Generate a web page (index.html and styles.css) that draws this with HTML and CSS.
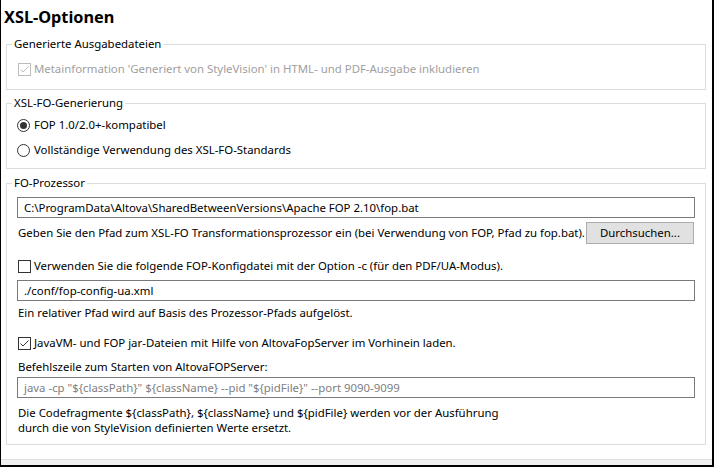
FILE: index.html
```html
<!DOCTYPE html>
<html lang="de">
<head>
<meta charset="utf-8">
<title>XSL-Optionen</title>
<link rel="stylesheet" href="styles.css">
</head>
<body>
<div class="window">
  <div class="content">
    <h1 class="title">XSL-Optionen</h1>

    <fieldset class="group g1">
      <legend>Generierte Ausgabedateien</legend>
      <div class="opt disabled first">
        <span class="box"><svg viewBox="0 0 13 13" width="13" height="13"><path d="M2.5 6.5 L5 9 L10.5 3.5" fill="none" stroke="currentColor" stroke-width="1"/></svg></span>
        <span>Metainformation 'Generiert von StyleVision' in HTML- und PDF-Ausgabe inkludieren</span>
      </div>
    </fieldset>

    <fieldset class="group g2">
      <legend>XSL-FO-Generierung</legend>
      <div class="opt radio-row first">
        <span class="radio checked"></span>
        <span>FOP 1.0/2.0+-kompatibel</span>
      </div>
      <div class="opt radio-row second">
        <span class="radio"></span>
        <span>Vollständige Verwendung des XSL-FO-Standards</span>
      </div>
    </fieldset>

    <fieldset class="group g3">
      <legend>FO-Prozessor</legend>
      <div class="field path">C:\ProgramData\Altova\SharedBetweenVersions\Apache FOP 2.10\fop.bat</div>
      <div class="browse-row">
        <span class="text">Geben Sie den Pfad zum XSL-FO Transformationsprozessor ein (bei Verwendung von FOP, Pfad zu fop.bat).</span>
        <span class="button">Durchsuchen...</span>
      </div>
      <div class="opt config">
        <span class="box"></span>
        <span>Verwenden Sie die folgende FOP-Konfigdatei mit der Option -c (für den PDF/UA-Modus).</span>
      </div>
      <div class="field config-path">./conf/fop-config-ua.xml</div>
      <div class="text note">Ein relativer Pfad wird auf Basis des Prozessor-Pfads aufgelöst.</div>
      <div class="opt preload">
        <span class="box"><svg viewBox="0 0 13 13" width="13" height="13"><path d="M2.5 6.5 L5 9 L10.5 3.5" fill="none" stroke="currentColor" stroke-width="1"/></svg></span>
        <span>JavaVM- und FOP jar-Dateien mit Hilfe von AltovaFopServer im Vorhinein laden.</span>
      </div>
      <div class="text cmd-label">Befehlszeile zum Starten von AltovaFOPServer:</div>
      <div class="field cmd">java -cp "${classPath}" ${className} --pid "${pidFile}" --port 9090-9099</div>
      <div class="text explain">
        <div>Die Codefragmente ${classPath}, ${className} und ${pidFile} werden vor der Ausführung</div>
        <div>durch die von StyleVision definierten Werte ersetzt.</div>
      </div>
    </fieldset>
  </div>
  <div class="statusbar"></div>
</div>
</body>
</html>
```

FILE: styles.css
```css
html, body {
  margin: 0;
  padding: 0;
  background: #fff;
}

body {
  font-family: "Noto Sans", "Open Sans", sans-serif;
  font-size: 11.4px;
  line-height: 16px;
  color: #000;
}

.window {
  width: 714px;
  height: 467px;
  box-sizing: border-box;
  border-left: 1px solid #000;
  border-right: 2px solid #000;
  border-bottom: 2px solid #000;
  display: flex;
  flex-direction: column;
  background: #fff;
}

.content {
  flex: 1;
}

.title {
  margin: 0;
  height: 36px;
  box-sizing: border-box;
  padding: 6px 0 0 3px;
  font-size: 16.3px;
  line-height: 22px;
  font-weight: bold;
}

.group {
  margin: 0 6px 0 5px;
  padding: 0 10px;
  border: 1px solid #dcdcdc;
  min-width: 0;
}

.group legend {
  padding: 0 2px;
  margin-left: -5px;
  line-height: 16px;
}

.g1 { padding-bottom: 12px; }
.g2 { margin-top: 5px; padding-bottom: 10px; }
.g3 { margin-top: 6px; padding-bottom: 9px; }

.opt {
  display: flex;
  align-items: center;
  gap: 3px;
  height: 16px;
  padding-left: 1px;
  white-space: nowrap;
}

.g1 .first { margin-top: 9px; }
.g2 .first { margin-top: 6px; }
.g2 .second { margin-top: 9px; }

.box {
  width: 13px;
  height: 13px;
  box-sizing: border-box;
  border: 1px solid #333;
  background: #fff;
  color: #333;
  display: flex;
  flex: none;
}

.box svg {
  margin: -1px;
  flex: none;
}

.disabled {
  color: #a0a0a0;
}

.disabled .box {
  border-color: #bcbcbc;
  color: #bcbcbc;
}

.radio-row {
  padding-left: 0;
  gap: 4px;
}

.radio {
  width: 13px;
  height: 13px;
  box-sizing: border-box;
  border: 1px solid #333;
  border-radius: 50%;
  background: #fff;
  display: flex;
  align-items: center;
  justify-content: center;
  flex: none;
}

.radio.checked::after {
  content: "";
  width: 7px;
  height: 7px;
  border-radius: 50%;
  background: #333;
}

.field {
  height: 21px;
  box-sizing: border-box;
  border: 1px solid #7a7a7a;
  padding: 0 6px;
  line-height: 19px;
  white-space: nowrap;
  overflow: hidden;
  background: #fff;
}

.text {
  padding-left: 1px;
  white-space: nowrap;
}

.path { margin-top: 6px; }

.browse-row {
  margin-top: 4px;
  display: flex;
  align-items: center;
  justify-content: space-between;
}

.button {
  width: 108px;
  height: 22px;
  box-sizing: border-box;
  margin-right: 1px;
  border: 1px solid #adadad;
  background: #e1e1e1;
  display: flex;
  align-items: center;
  justify-content: center;
}

.config { margin-top: 14px; }
.config-path { margin-top: 6px; }
.note { margin-top: 4px; }
.preload { margin-top: 14px; }
.cmd-label { margin-top: 8px; }
.cmd { margin-top: 2px; color: #808080; }
.explain { margin-top: 7px; line-height: 15px; }

.statusbar {
  height: 6px;
  box-sizing: border-box;
  border-top: 1px solid #e0e0e0;
  background: #efefef;
}
```
